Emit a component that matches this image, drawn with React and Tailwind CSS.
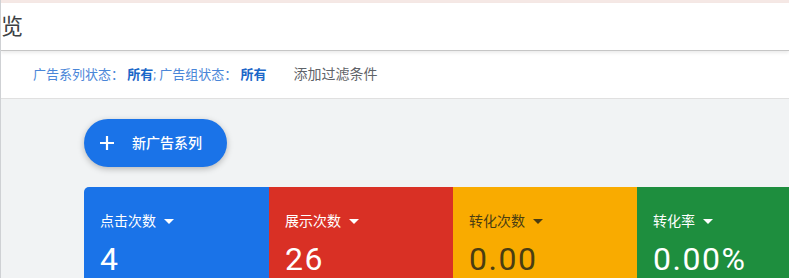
import React from 'react';

const cards = [
  { label: '点击次数', value: '4', bg: 'bg-[#1a73e8]', text: 'text-white', w: 'w-[185px]' },
  { label: '展示次数', value: '26', bg: 'bg-[#d93025]', text: 'text-white', w: 'w-[184px]' },
  { label: '转化次数', value: '0.00', bg: 'bg-[#f9ab00]', text: 'text-[#4a3d12]', w: 'w-[184px]' },
  { label: '转化率', value: '0.00%', bg: 'bg-[#1e8e3e]', text: 'text-white', w: 'flex-1' },
];

function Caret() {
  return (
    <svg width="10" height="5" viewBox="0 0 10 5" className="ml-[8px] fill-current">
      <path d="M0 0h10L5 5z" />
    </svg>
  );
}

export default function App() {
  return (
    <div
      className="w-[789px] h-[278px] overflow-hidden bg-[#f1f3f4] border-l border-[#cfd1d4]"
      style={{ fontFamily: 'Roboto, "Noto Sans CJK SC", sans-serif' }}
    >
      {/* Top strip */}
      <div className="h-[3px] bg-[#f5e8e5]" />

      {/* Title bar */}
      <div className="h-[48px] bg-white flex items-center border-b border-[#c6c6c6] shadow-[0_2px_3px_rgba(0,0,0,0.08)] relative z-10">
        <span className="ml-[-22px] text-[22px] text-[#3c4043] leading-none">概览</span>
      </div>

      {/* Filter row */}
      <div className="h-[48px] bg-white flex items-center border-b border-[#e0e0e0] text-[13px]">
        <span className="ml-[32px] text-[#4a86d8]">
          广告系列状态：&nbsp;<span className="font-bold text-[#1a66c8]">所有</span>; 广告组状态：&nbsp;
          <span className="font-bold text-[#1a66c8]">所有</span>
        </span>
        <span className="ml-[27px] text-[#5f6368] text-[14px]">添加过滤条件</span>
      </div>

      {/* Content */}
      <div className="pl-[83px] pt-[20px]">
        <button className="h-[48px] w-[143px] rounded-full bg-[#1a73e8] text-white flex items-center shadow-[0_2px_6px_rgba(0,0,0,0.25)]">
          <svg width="16" height="16" viewBox="0 0 16 16" className="ml-[15px]">
            <path d="M8 1v14M1 8h14" stroke="white" strokeWidth="2.2" />
          </svg>
          <span className="ml-[17px] text-[14px] font-medium">新广告系列</span>
        </button>

        <div className="mt-[20px] flex rounded-tl-[5px] overflow-hidden">
          {cards.map((c) => (
            <div key={c.label} className={`${c.bg} ${c.text} ${c.w} h-[100px] pl-[16px] pt-[24px]`}>
              <div className="flex items-center text-[14px] leading-[20px]">
                {c.label}
                <Caret />
              </div>
              <div className="mt-[9px] text-[32px] font-normal tracking-[1.5px] leading-[38px]">{c.value}</div>
            </div>
          ))}
        </div>
      </div>
    </div>
  );
}
